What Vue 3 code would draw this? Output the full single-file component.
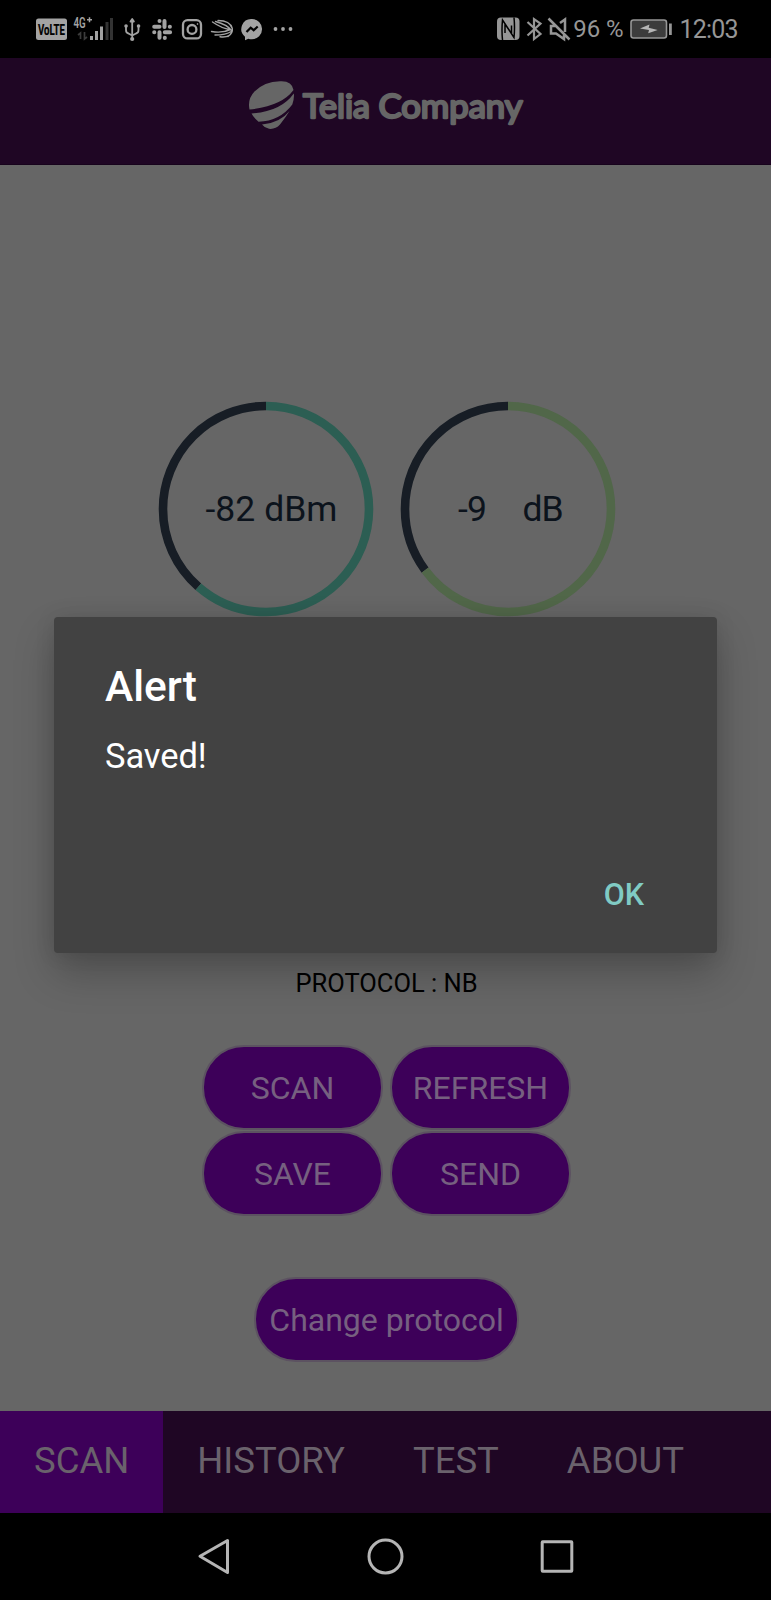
<script setup>
const R = 103
const C = 2 * Math.PI * R
const gauges = [
  { id: 'rssi', share: 220.8 / 360, color: '#2c5e53', parts: [{ t: '-82 dBm', x: 47.5, w: 132 }] },
  { id: 'snr', share: 233.3 / 360, color: '#516749', parts: [{ t: '-9', x: 58, w: 29 }, { t: 'dB', x: 122.5, w: 41 }] },
]
const actions = ['SCAN', 'REFRESH', 'SAVE', 'SEND']
const tabs = ['SCAN', 'HISTORY', 'TEST', 'ABOUT']
</script>

<template>
  <div class="phone">
    <div class="status">
      <svg width="771" height="58" viewBox="0 0 771 58">
        <g fill="#a3a3a3">
          <rect x="36" y="18.500" width="31" height="21.500" rx="2.500" />
          <text transform="translate(38 34.500) scale(.77 1.180)" font-size="12.500" font-weight="700" fill="#000" stroke="#000" stroke-width=".2">VoLTE</text>
          <text transform="translate(73.500 27.500) scale(.78 1.100)" font-size="12.500" font-weight="600">4G</text>
          <path d="M87 19.800h5M89.500 17.300v5" stroke="#a3a3a3" stroke-width="1.500" />
          <path d="M90 36h3v4h-3zM95 31h3v9h-3zM100 26.500h3v13.500h-3z" />
          <path d="M105.500 22h3v18h-3zM110 18h3v22h-3z" fill="#333" />
          <path d="M80.500 39v-6l-2.500 2M84.500 32v7l2.500-2" fill="none" stroke="#3b3b3b" stroke-width="1.700" />
        </g>
        <g fill="none" stroke="#a3a3a3" stroke-width="1.800" stroke-linecap="round" stroke-linejoin="round">
          <path d="M132.200 20v18M126 26v4q0 3 2.500 3.500l3.700 2M138.500 26v4q0 3-2.500 3.500l-3.800 2" />
          <circle cx="132.200" cy="39" r="1.200" fill="#a3a3a3" />
          <path d="M130.500 21.500l1.700-2.500 1.700 2.500z" fill="#a3a3a3" />
          <path d="M126 26h.1M138.500 26h.1" stroke-width="3.500" />
        </g>
        <g stroke="#a3a3a3" stroke-width="4" stroke-linecap="round">
          <path d="M159.500 21v.1M164.500 21v6M154.200 26.800h5.300M169.800 26.800h.1M154.200 32.200h.1M159.500 32.200v5.600M164.800 32.200h5.300M164.800 37.800v.1" />
        </g>
        <g fill="none" stroke="#a3a3a3" stroke-width="2.300">
          <rect x="183" y="20.200" width="18" height="18.200" rx="4.500" />
          <circle cx="192" cy="29.400" r="4.400" />
          <circle cx="197.500" cy="24" r=".5" stroke-width="1" />
        </g>
        <g fill="none" stroke="#a3a3a3" stroke-width="1.400" stroke-linecap="round">
          <path d="M218 20.500Q230 20.500 232.300 28.500Q233 33 228 36.500M212.500 22Q222 28.500 230 29.500M215.500 21.500Q227 24.500 231.500 30.500M211.500 31.500Q222 33.500 230.500 29.500M215 35Q226 35 231.300 31.500M220 36.800Q226 37.500 229 35.500" />
        </g>
        <path d="M252 19a10 10 0 0 1 0 20.200q-2 0-3.700-.5l-3.300 1.500v-3.500a10 10 0 0 1 7-17.700z" fill="#a3a3a3" />
        <path d="M246.500 32l4.200-4.300 3 2.500 4-3.700" fill="none" stroke="#000" stroke-width="2.200" />
        <g fill="#a3a3a3"><circle cx="275.500" cy="29" r="1.900" /><circle cx="283" cy="29" r="1.900" /><circle cx="290.500" cy="29" r="1.900" /></g>

        <rect x="497" y="17.500" width="22.500" height="22.500" rx="4" fill="#969696" />
        <path d="M502.500 40q-1-10 0-20l9 13.500v-8M514 17.500q1 10 0 20l-9-13.500v9" fill="none" stroke="#000" stroke-width="1.500" />
        <path d="M527.500 22l13 12-6.500 5v-20l6.500 4.500-13 12" fill="none" stroke="#969696" stroke-width="2.200" />
        <path d="M565 32v-12.500l-5 3.500M556 26h-5v7.500h5l8 5.500v-4M548.500 18.500l21 21" fill="none" stroke="#969696" stroke-width="2.500" />
        <text x="573.200" y="37.300" font-size="24" fill="#969696" textLength="50.500">96 %</text>
        <rect x="631" y="20" width="35.500" height="18" rx="2.500" fill="#3c3c3c" stroke="#969696" stroke-width="1.600" />
        <path d="M640 28.500l9.500-4-.8 3.200 9 2.200-9.500 3.300.8-3.200z" fill="#b5b5b5" />
        <rect x="669" y="23.500" width="2.800" height="11.500" fill="#969696" />
        <text x="679.500" y="37.700" font-size="25" fill="#969696" textLength="59">12:03</text>
      </svg>
    </div>

    <header class="header">
      <svg width="300" height="107" viewBox="235 58 300 107">
        <g fill="#666">
          <path d="M249.500 109.500Q247.300 99 254.500 91.500Q264 81.700 280 81.200Q292 80.500 293.500 90Q282 106 249.500 109.500z" />
          <path d="M293.800 93.500Q294.500 98 292.300 104.500Q280 121 258.500 121.800Q253.500 117.500 251.500 113.500Q281 111.500 293.800 93.500z" />
          <path d="M289.500 111Q286 117 280 124.500Q275.500 129.500 269 128.800Q264.500 128 262 124.500Q280 123 289.500 111z" />
        </g>
        <g class="brand">
          <text x="303" y="118.300" textLength="67" lengthAdjust="spacingAndGlyphs">Telia</text>
          <text x="378.500" y="118.300" textLength="144" lengthAdjust="spacingAndGlyphs">Company</text>
        </g>
      </svg>
    </header>

    <main class="content">
      <div class="gauges">
        <svg v-for="g in gauges" :key="g.id" width="216" height="216" viewBox="0 0 216 216">
          <g fill="none" stroke-width="8.600" transform="rotate(-90 108 108)">
            <circle cx="108" cy="108" :r="R" stroke="#171d25" :stroke-dasharray="`${C * (1 - g.share)} ${C}`" :stroke-dashoffset="-C * g.share" />
            <circle cx="108" cy="108" :r="R" :stroke="g.color" :stroke-dasharray="`${C * g.share} ${C}`" />
          </g>
          <text v-for="p in g.parts" :key="p.t" :x="p.x" y="120" :textLength="p.w" font-size="35.500" fill="#0c131c">{{ p.t }}</text>
        </svg>
      </div>
      <p class="protocol">PROTOCOL : NB</p>
      <div class="actions">
        <button v-for="a in actions" :key="a" class="pill">{{ a }}</button>
      </div>
      <button class="pill change">Change protocol</button>
    </main>

    <nav class="tabs">
      <div v-for="(t, i) in tabs" :key="t" class="tab" :class="{ active: i === 0 }">{{ t }}</div>
    </nav>

    <div class="system">
      <svg width="771" height="87" viewBox="0 1513 771 87" fill="none" stroke="#b5b5b5" stroke-width="3" stroke-linejoin="round">
        <path d="M200 1556.300L227.500 1540.500V1572.500z" />
        <circle cx="385.500" cy="1556.500" r="16.500" />
        <rect x="542.200" y="1541.700" width="29.600" height="29.600" rx=".5" />
      </svg>
    </div>

    <section class="dialog">
      <h1>Alert</h1>
      <p>Saved!</p>
      <div class="ok">OK</div>
    </section>
  </div>
</template>

<style>
body { margin: 0; background: #000; }
</style>

<style scoped>
.phone { position: relative; width: 771px; height: 1600px; overflow: hidden; display: flex; flex-direction: column; background: #666; font-family: Roboto, "Liberation Sans", sans-serif; }
svg { display: block; flex: none; }
.status { height: 58px; background: #000; }
.header { box-sizing: border-box; height: 107px; background: #1f0624; border-bottom: 1px solid #17031c; display: flex; padding-left: 235px; }
.brand { font-family: Lato, sans-serif; font-size: 33px; font-weight: 400; fill: #666; stroke: #666; stroke-width: 2.300; stroke-linejoin: round; }
.content { flex: 1; display: flex; flex-direction: column; align-items: center; padding-left: 2px; }
.gauges { display: flex; gap: 26px; margin-top: 236px; }
.protocol { margin: 351px 0 0; height: 30px; line-height: 30px; font-size: 25.500px; color: #000; }
.actions { display: grid; grid-template-columns: 181px 181px; gap: 1px 7px; margin-top: 47px; }
.pill { box-sizing: border-box; height: 85px; padding: 0; border: 2px solid #5c5261; border-radius: 42px; background: #3d0059; color: #766080; font: 400 32px/83px Roboto, "Liberation Sans", sans-serif; text-align: center; }
.change { width: 265px; margin-top: 61px; white-space: nowrap; }
.tabs { height: 102px; background: #1f0624; display: flex; }
.tab { padding: 0 34px; line-height: 100px; font-size: 36.500px; color: #6a626c; }
.tab.active { background: #3d0059; }
.system { height: 87px; background: #000; }
.dialog { position: absolute; left: 54px; top: 617px; box-sizing: border-box; width: 663px; height: 336px; padding: 44px 73px 0 51px; background: #424242; border-radius: 4px; color: #fff; box-shadow: 0 20px 40px rgba(0, 0, 0, .24), 0 1px 20px rgba(0, 0, 0, .1); }
h1 { margin: 0; font-size: 42.500px; font-weight: 500; line-height: 52px; }
.dialog p { margin: 22px 0 0; font-size: 34.500px; line-height: 42px; letter-spacing: -.1px; }
.ok { margin-top: 99px; text-align: right; font-size: 30.500px; font-weight: 500; line-height: 38px; color: #80cbc4; }
</style>
